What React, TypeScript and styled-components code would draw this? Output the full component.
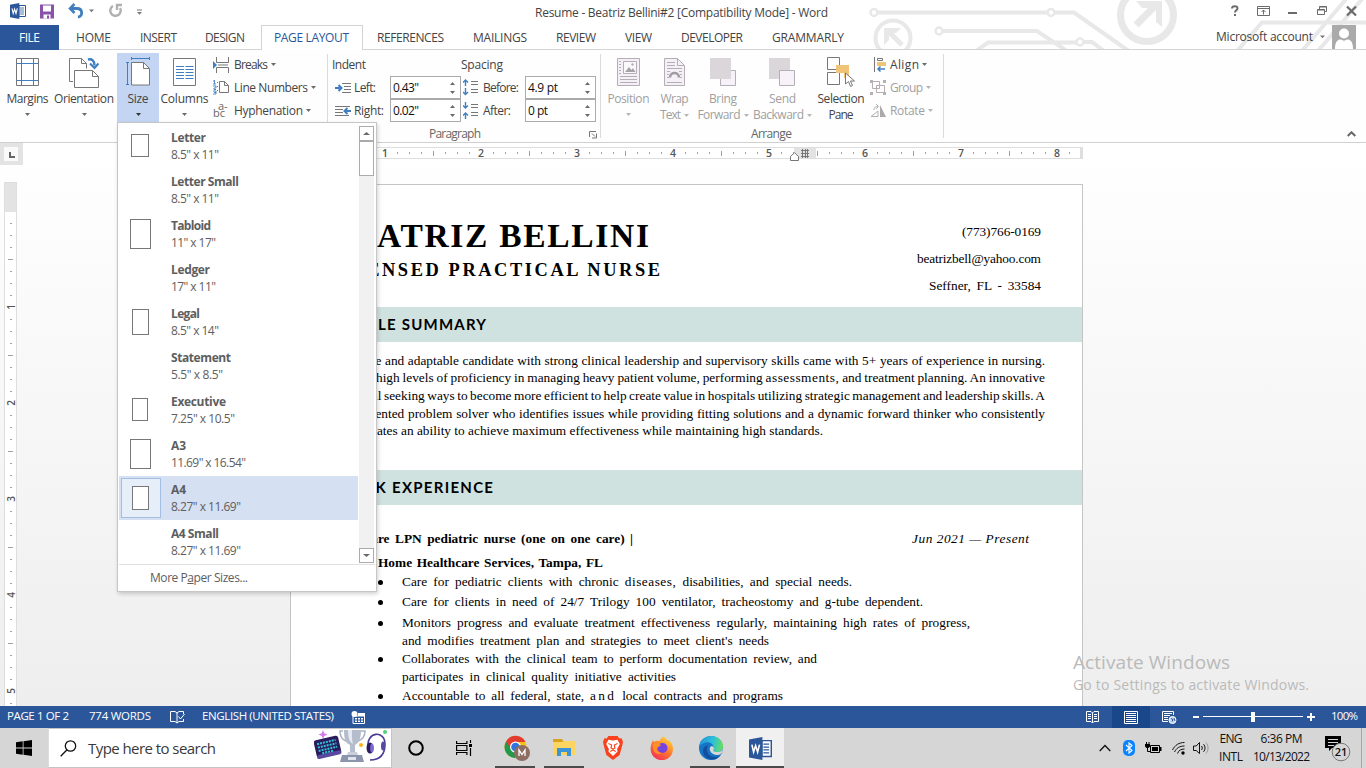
import React, { useLayoutEffect, useRef, useState } from "react";
import styled, { createGlobalStyle } from "styled-components";

const ui = `"Open Sans", "Noto Sans", "Liberation Sans", sans-serif`;
const serif = `"Liberation Serif", "Times New Roman", serif`;

const Global = createGlobalStyle`
  * { box-sizing: border-box; }
  html, body { margin: 0; padding: 0; overflow: hidden; }
  body { font-family: ${ui}; font-size: 12px; color: #444; background: #fff; }
  svg { display: block; flex: none; }
`;

/* ---------- text set to a measured width ---------- */
const FitBox = styled.span<{ $w: number }>`
  display: block;
  flex: none;
  width: ${(p) => p.$w}px;
  white-space: pre;
  text-align: left;
`;
const FitInner = styled.span`
  display: inline-block;
`;
const Lead = styled.span`
  white-space: pre;
  flex: none;
`;

function Fit({ w, words, lead, children }: { w: number; words?: boolean; lead?: string; children: React.ReactNode }) {
  const ref = useRef<HTMLSpanElement>(null);
  const [gap, setGap] = useState(0);
  useLayoutEffect(() => {
    const el = ref.current;
    if (!el) return;
    const text = el.textContent || "";
    const slots = words ? text.split(" ").length - 1 : text.length - 1;
    if (slots > 0) setGap((w - el.getBoundingClientRect().width) / slots);
  }, []);
  const style = words ? { wordSpacing: gap } : { letterSpacing: gap };
  return (
    <>
      {lead && <Lead style={style}>{lead}</Lead>}
      <FitBox $w={w}>
        <FitInner ref={ref} style={style}>{children}</FitInner>
      </FitBox>
    </>
  );
}

/* ---------- shell ---------- */
const Screen = styled.div`
  position: relative;
  width: 1366px;
  height: 768px;
  display: flex;
  flex-direction: column;
  overflow: hidden;
  background: #fff;
`;
const Header = styled.header`
  position: relative;
  height: 50px;
  flex: none;
`;
const Circuit = styled.svg`
  position: absolute;
  left: 860px;
  top: 0;
`;
const TitleBar = styled.div`
  position: relative;
  display: flex;
  height: 25px;
  line-height: 25px;
`;
const Quick = styled.div`
  display: flex;
  width: 535px;
  padding: 3px 0 0 10px;
`;
const Gap = styled.div<{ $w: number }>`
  width: ${(p) => p.$w}px;
  flex: none;
`;
const WinButtons = styled.div`
  display: flex;
  margin-left: auto;
  padding-top: 4px;
  padding-right: 9px;
`;
const Tabs = styled.nav`
  position: relative;
  display: flex;
  height: 25px;
  line-height: 25px;
  border-bottom: 1px solid #d4d4d4;
`;
const FileTab = styled.div`
  width: 59px;
  height: 25px;
  padding-left: 19px;
  background: #2b579a;
  color: #fff;
`;
const Tab = styled.div<{ $ml: number; $active?: boolean }>`
  margin-left: ${(p) => p.$ml}px;
  height: 25px;
  ${(p) => p.$active && `
    padding: 0 12px;
    width: 102px;
    line-height: 23px;
    border: 1px solid #d4d4d4;
    border-bottom: 0;
    background: #fff;
    color: #2b579a;`}
`;
const Account = styled.div`
  display: flex;
  margin-left: auto;
  padding-right: 10px;
  line-height: 24px;
`;

/* ---------- ribbon ---------- */
const Ribbon = styled.section`
  display: flex;
  height: 93px;
  flex: none;
  border-bottom: 1px solid #d0d0d0;
  background: #fefefe;
  position: relative;
`;
const Group = styled.div<{ $w: number; $pl?: number }>`
  display: flex;
  width: ${(p) => p.$w}px;
  height: 84px;
  margin-top: 4px;
  padding-left: ${(p) => p.$pl || 0}px;
  border-right: 1px solid #dcdcdc;
`;
const BigButton = styled.div<{ $w: number; $on?: boolean; $off?: boolean }>`
  display: flex;
  flex-direction: column;
  align-items: center;
  width: ${(p) => p.$w}px;
  height: 69px;
  margin-top: -1px;
  padding-top: 4px;
  line-height: 16px;
  background: ${(p) => (p.$on ? "#c3d5f2" : "transparent")};
  color: ${(p) => (p.$off ? "#a0a0a0" : "#444")};
`;
const IconSlot = styled.div`
  height: 34px;
  flex: none;
`;
const LabelRow = styled.div`
  display: flex;
  align-items: center;
  height: 16px;
  gap: 3px;
`;
const SmallCol = styled.div`
  display: flex;
  flex-direction: column;
  height: 69px;
  margin: -1px 0 0 3px;
`;
const SmallButton = styled.div<{ $off?: boolean }>`
  display: flex;
  align-items: center;
  height: 23px;
  color: ${(p) => (p.$off ? "#a0a0a0" : "#444")};
`;
const SmallIcon = styled.div<{ $w: number }>`
  width: ${(p) => p.$w}px;
  flex: none;
`;
const ArrowPad = styled.div`
  margin-left: 3px;
`;
const Fields = styled.div`
  display: flex;
  flex-direction: column;
  width: 100%;
`;
const FieldHeads = styled.div`
  display: flex;
  height: 22px;
  line-height: 22px;
`;
const FieldRow = styled.div`
  display: flex;
  align-items: center;
  height: 23px;
`;
const Spin = styled.div`
  display: flex;
  justify-content: space-between;
  align-items: center;
  width: 71px;
  height: 23px;
  padding: 0 5px 0 2px;
  border: 1px solid #ababab;
  background: #fff;
  color: #111;
`;
const SpinArrows = styled.div`
  display: flex;
  flex-direction: column;
  gap: 6px;
`;
const GroupTitle = styled.div<{ $pl: number }>`
  display: flex;
  height: 18px;
  margin-top: 3px;
  line-height: 18px;
  padding-left: ${(p) => p.$pl}px;
  color: #666;
`;
const Stack = styled.div`
  display: flex;
  flex-direction: column;
`;
const Row = styled.div`
  display: flex;
`;
const Collapse = styled.div`
  margin-left: auto;
  padding: 81px 10px 0 0;
`;

/* ---------- workspace ---------- */
const Work = styled.main`
  position: relative;
  display: flex;
  height: 563px;
  flex: none;
  background: linear-gradient(#fff, #eeeeee);
  overflow: hidden;
`;
const LeftRail = styled.div`
  width: 290px;
  flex: none;
`;
const TabStop = styled.div`
  width: 23px;
  height: 22px;
  padding: 4px;
  background: #e3e3e3;
`;
const VRuler = styled.div`
  width: 13px;
  height: 530px;
  margin: 17px 0 0 4px;
  border: 1px solid #dedede;
  background: #fff;
`;
const VMargin = styled.div`
  height: 29px;
  background: #e3e3e3;
`;
const VCells = styled.div`
  padding-top: 5px;
`;
const VCell = styled.div`
  display: flex;
  align-items: center;
  justify-content: center;
  height: 12px;
`;
const Tick = styled.i<{ $w: number; $h: number }>`
  width: ${(p) => p.$w}px;
  height: ${(p) => p.$h}px;
  background: #a2a2a2;
`;
const Num = styled.span<{ $v?: boolean }>`
  font-size: 10.5px;
  line-height: 10px;
  font-weight: 600;
  color: #555;
  ${(p) => p.$v && "transform: rotate(-90deg); font-size: 10px;"}
`;
const PageCol = styled.div`
  width: 793px;
  flex: none;
`;
const HRuler = styled.div`
  position: relative;
  z-index: 0;
  display: flex;
  height: 12px;
  margin-top: 4px;
  padding-left: 5px;
  border-top: 1px solid #dedede;
  border-bottom: 1px solid #dedede;
  border-right: 3px solid #dedede;
  background: #fff;
  overflow: hidden;
`;
const HCell = styled.div`
  display: flex;
  align-items: center;
  justify-content: center;
  width: 12px;
  flex: none;
  z-index: 1;
`;
const ColumnMark = styled.div`
  position: absolute;
  left: 504px;
  top: -1px;
  width: 22px;
  height: 12px;
  background: #e3e3e3;
`;
const Marker = styled.svg`
  position: absolute;
  left: 790px;
  top: 9px;
`;
const Paper = styled.article`
  height: 540px;
  margin-top: 25px;
  border: 1px solid #c4c4c4;
  background: #fff;
  color: #000;
  font-family: ${serif};
  font-size: 13.33px;
  overflow: hidden;
`;
const DocHead = styled.div`
  display: flex;
  height: 122px;
`;
const NameCol = styled.div`
  width: 369px;
  padding-top: 31px;
  font-weight: 700;
`;
const Name = styled.div`
  display: flex;
  justify-content: flex-end;
  width: 358px;
  height: 40px;
  line-height: 40px;
  font-size: 33.5px;
`;
const Role = styled.div`
  display: flex;
  justify-content: flex-end;
  height: 24px;
  margin-top: 2px;
  line-height: 24px;
  font-size: 18.4px;
`;
const Contact = styled.div`
  display: flex;
  flex-direction: column;
  align-items: flex-end;
  width: 381px;
  padding-top: 33px;
  line-height: 27px;
`;
const Bar = styled.div<{ $r: number }>`
  display: flex;
  justify-content: flex-end;
  height: 35px;
  padding-right: ${(p) => p.$r}px;
  background: #d0e2e0;
  line-height: 35px;
  font-family: Lato, "Open Sans", sans-serif;
  font-weight: 700;
  font-size: 15px;
`;
const Summary = styled.div`
  height: 128px;
  padding-top: 10px;
`;
const Line = styled.div<{ $r: number; $h: number; $b?: boolean }>`
  display: flex;
  justify-content: flex-end;
  width: ${(p) => p.$r}px;
  height: ${(p) => p.$h}px;
  line-height: 18px;
  font-weight: ${(p) => (p.$b ? 700 : 400)};
`;
const Spaced = styled.span`
  letter-spacing: 0.5px;
`;
const Wide = styled.span`
  letter-spacing: 2.4px;
`;
const Job = styled.div`
  padding-top: 25px;
`;
const JobRow = styled.div`
  display: flex;
`;
const JobDate = styled.div`
  margin-left: 279px;
  line-height: 17px;
  font-style: italic;
`;
const Bullet = styled.div<{ $h: number }>`
  display: flex;
  height: ${(p) => p.$h}px;
  padding-left: 87px;
  line-height: 18px;
`;
const Dot = styled.i<{ $on: boolean }>`
  width: 5px;
  height: 5px;
  margin: 7px 19px 0 0;
  border-radius: 50%;
  background: ${(p) => (p.$on ? "#000" : "transparent")};
`;
const Watermark = styled.div`
  position: absolute;
  left: 1073px;
  top: 506px;
  color: #bababa;
  font-size: 19px;
  line-height: 27px;
`;
const WatermarkSub = styled.div`
  font-size: 14px;
  line-height: 17px;
`;

/* ---------- dropdown ---------- */
const Menu = styled.div`
  position: absolute;
  left: 117px;
  top: 122px;
  width: 260px;
  height: 470px;
  padding: 1px;
  border: 1px solid #c6c6c6;
  background: #fff;
  box-shadow: 1px 2px 4px rgba(0, 0, 0, 0.18);
  color: #5e5e5e;
`;
const MenuBody = styled.div`
  display: flex;
  height: 440px;
`;
const Items = styled.div`
  width: 239px;
`;
const Item = styled.div<{ $on?: boolean }>`
  display: flex;
  height: 44px;
  background: ${(p) => (p.$on ? "#d5e0f2" : "transparent")};
`;
const Thumb = styled.div<{ $on?: boolean }>`
  display: flex;
  align-items: center;
  justify-content: center;
  width: 40px;
  height: 40px;
  margin: 2px 10px 2px 2px;
  padding: 0 2px 1px 0;
  border: 1px solid ${(p) => (p.$on ? "#a3bde3" : "transparent")};
  background: ${(p) => (p.$on ? "#e6eefa" : "transparent")};
`;
const Sheet = styled.i<{ $w: number; $h: number }>`
  width: ${(p) => p.$w}px;
  height: ${(p) => p.$h}px;
  border: 1px solid #777;
  background: #fff;
`;
const ItemText = styled.div`
  padding-top: 5px;
  line-height: 17px;
`;
const ItemName = styled.div`
  font-weight: 700;
`;
const Scroll = styled.div`
  display: flex;
  flex-direction: column;
  width: 15px;
  height: 437px;
  margin: 2px 0 0 1px;
  background: #f1f1f1;
`;
const ScrollButton = styled.div`
  display: flex;
  align-items: center;
  justify-content: center;
  height: 15px;
  border: 1px solid #ababab;
  background: #fff;
`;
const ScrollThumb = styled.div`
  height: 35px;
  margin-bottom: auto;
  border: 1px solid #ababab;
  background: #fff;
`;
const MoreSizes = styled.div`
  height: 27px;
  padding-left: 31px;
  border-top: 1px solid #e1e1e1;
  line-height: 26px;
`;

/* ---------- status bar ---------- */
const Status = styled.footer`
  display: flex;
  align-items: center;
  height: 22px;
  flex: none;
  background: #2b579a;
  color: #fff;
  font-size: 11.5px;
  line-height: 20px;
  position: relative;
`;
const StatusText = styled.div`
  height: 22px;
`;
const ViewOn = styled.div`
  display: flex;
  align-items: center;
  width: 38px;
  height: 22px;
  padding-left: 12px;
  background: #19478a;
`;
const Push = styled.div`
  margin-left: auto;
`;

/* ---------- taskbar ---------- */
const Taskbar = styled.footer`
  display: flex;
  height: 40px;
  flex: none;
  background: #d6d6d6;
  color: #111;
`;
const Start = styled.div`
  width: 48px;
  padding: 12px 0 0 16px;
`;
const Search = styled.div`
  display: flex;
  align-items: center;
  width: 344px;
  height: 40px;
  padding-left: 11px;
  border: 1px solid #c4c4c4;
  border-left-color: #ddd;
  background: #fff;
  color: #3a3a3a;
  font-size: 15px;
`;
const TaskButton = styled.div<{ $w: number; $line?: number; $on?: boolean }>`
  display: flex;
  flex-direction: column;
  align-items: center;
  justify-content: space-between;
  width: ${(p) => p.$w}px;
  height: 40px;
  background: ${(p) => (p.$on ? "#f0f0f0" : "transparent")};
  &::after {
    content: "";
    width: ${(p) => p.$line || 0}px;
    height: 2px;
    background: #4b4b4b;
  }
`;
const AppIcon = styled.div<{ $pl?: number }>`
  display: flex;
  align-items: center;
  height: 38px;
  padding-top: 2px;
  padding-left: ${(p) => p.$pl || 0}px;
`;
const Tray = styled.div`
  display: flex;
  align-items: center;
  margin-left: auto;
`;
const TrayText = styled.div`
  display: flex;
  flex-direction: column;
  align-items: center;
  line-height: 18px;
  padding-bottom: 1px;
`;
const Desk = styled.div`
  width: 5px;
  height: 40px;
  border-left: 1px solid #a5a5a5;
`;

/* ---------- icons ---------- */
const Arrow = ({ c = "#6a6a6a", up, w = 5 }: { c?: string; up?: boolean; w?: number }) => (
  <svg width={w} height={3} viewBox="0 0 6 3" preserveAspectRatio="none"><path d={up ? "M3 0L6 3H0z" : "M0 0H6L3 3z"} fill={c} /></svg>
);
const WordLogo = ({ s }: { s: number }) => (
  <svg width={s} height={s} viewBox="0 0 16 16">
    <path d="M9 2.500h6.500v11H9z" fill="#fff" stroke="#2b579a" />
    <path d="M10 5h4M10 7h4M10 9h4M10 11h4" stroke="#2b579a" strokeWidth=".8" />
    <path d="M0 1.800L9.300 0v16L0 14.200z" fill="#2b579a" />
    <path d="M2 5.300l1.200 5.200L4.600 6l1.400 4.500L7.300 5.300" fill="none" stroke="#fff" strokeWidth="1.100" />
  </svg>
);
const g = "#777";
const b = "#3f7fbf";
const Margins = () => (
  <svg width="23" height="28" fill="none"><path d="M.5.5h22v27H.5z" stroke={g} fill="#fff" /><path d="M5.500 1v26M17.500 1v26M1 5.500h21M1 22.500h21" stroke={b} /></svg>
);
const Orientation = () => (
  <svg width="30" height="31" fill="none" stroke={g}>
    <path d="M4 24.500H.5V1.500h12l5 5v5" fill="#fff" /><path d="M12.500 1.500v5h5" />
    <path d="M5.500 13.500h18l6 6v11h-24z" fill="#fff" /><path d="M23.500 13.500v6h6" />
    <path d="M19 2.500c4-1 6.500 1.500 6.500 6" stroke={b} strokeWidth="2.400" /><path d="M21 6.500l4.500 4.500 4-4.500" stroke={b} strokeWidth="2.200" />
  </svg>
);
const Size = () => (
  <svg width="25" height="30" fill="none">
    <path d="M5.500 5.500h12l6 6v16.500h-18z" fill="#fff" stroke={g} /><path d="M17.500 5.500v6h6" stroke={g} />
    <path d="M5.500 1.500h18M5.500 0v3M23.500 0v3M1.500 5.500v22M0 5.500h3M0 27.500h3" stroke={b} />
  </svg>
);
const Columns = () => (
  <svg width="23" height="28" fill="none"><path d="M.5.5h22v27H.5z" stroke={g} fill="#fff" />
    <path d="M3 8.500h8M3 11.500h8M3 14.500h8M3 17.500h8M3 20.500h8M12.500 8.500h8M12.500 11.500h8M12.500 14.500h8M12.500 17.500h8M12.500 20.500h8" stroke={b} /></svg>
);
const Breaks = () => (
  <svg width="17" height="16" fill="none"><path d="M3.500 0v5.500h12V0M3.500 16v-5.500h12V16M5 8h10" stroke={g} /><path d="M0 4l4 4-4 4z" fill={b} /></svg>
);
const LineNumbers = () => (
  <svg width="17" height="15" fill="none">
    <path d="M1.500 0v4M0 4h3M0 1h1M0 6h3v2H1v1.500h2M0 11h3v3H0M1 12.500h2" stroke={b} strokeWidth=".9" />
    <path d="M6.500 1.500h5l4 4v7h-9z" fill="#fff" stroke={g} /><path d="M11.500 1.500v4h4M4.500 2v1M4.500 6v1M4.500 10v1" stroke={g} />
  </svg>
);
const HyphenBox = styled.div`
  display: flex;
  align-items: flex-start;
  height: 17px;
  color: #666;
  font-size: 11px;
  line-height: 22px;
`;
const HyphenTop = styled.span`
  margin-left: -7px;
  line-height: 8px;
`;
const IndentIcon = ({ right }: { right?: boolean }) => (
  <svg width="17" height="12" fill="none">
    {right ? (
      <><path d="M0 1.500h15M0 4.500h8M0 7.500h8M0 10.500h14" stroke={g} /><path d="M16 6h-6M12.500 3l-3 3 3 3" stroke={b} strokeWidth="2" /></>
    ) : (
      <><path d="M7 1.500h9M9 4.500h7M9 7.500h7M7 10.500h9" stroke={g} /><path d="M0 6h6M3.500 3l3 3-3 3" stroke={b} strokeWidth="2" /></>
    )}
  </svg>
);
const SpacingIcon = ({ after }: { after?: boolean }) => (
  <svg width="16" height="17" fill="none">
    <path d="M8 2.500h7M8 5.500h7M8 10.500h7M8 13.500h7" stroke={g} />
    {after ? (
      <path d="M2.500 0v6M0 3.500l2.500 2.500 2.500-2.500M2.500 17v-6M0 13.500l2.500-2.500 2.500 2.500" stroke={b} strokeWidth="1.400" />
    ) : (
      <path d="M2.500 7V1M0 3.500l2.500-2.500 2.500 2.500M2.500 9v6.500M0 13l2.500 2.500 2.500-2.500" stroke={b} strokeWidth="1.400" />
    )}
  </svg>
);
const pg = "#b5afb5";
const PositionIcon = () => (
  <svg width="23" height="28" fill="none" stroke={pg}>
    <path d="M.5.5h22v27H.5z" fill="#f5f0f7" /><path d="M6.500 3.500h13v12h-13z" fill="#fbf8fc" />
    <path d="M8 14l4-5 2.500 3 1.500-2 2.500 4z" fill="#a7a2a7" stroke="none" /><circle cx="15.500" cy="6.500" r="1.200" fill={pg} stroke="none" />
    <path d="M2 3.500h2M2 6.500h2M2 9.500h2M2 12.500h2M2 15.500h2M3 18.500h17M3 21.500h17M3 24.500h17" />
  </svg>
);
const WrapIcon = () => (
  <svg width="21" height="28" fill="none" stroke={pg}>
    <path d="M.5.5h13l7 7v20H.5z" fill="#f5f0f7" /><path d="M13.500.5v7h7M3 4.500h8M3 7.500h8M3 10.500h15M3 13.500h3M15 13.500h3M3 16.500h2M16 16.500h2M3 19.500h2M16 19.500h2M3 24.500h15" />
    <path d="M6 19.500c0-6 9-6 9 0" stroke="#a09ba0" strokeWidth="2.500" />
  </svg>
);
const BringIcon = () => (
  <svg width="27" height="28"><path d="M10.500 12.500h15v15h-15z" fill="#f7f2fa" stroke={pg} /><path d="M0 0h21v21H0z" fill="#dbd6da" /></svg>
);
const SendIcon = () => (
  <svg width="27" height="28"><path d="M0 0h21v21H0z" fill="#dbd6da" /><path d="M10.500 12.500h15v15h-15z" fill="#f7f2fa" stroke={pg} /></svg>
);
const SelectionIcon = () => (
  <svg width="28" height="30" fill="none">
    <path d="M.5.5h12v12H.5zM.5 15.500h12v12H.5z" fill="#fff" stroke={g} /><path d="M9 8h13v13h-5v-5H9z" fill="#efc477" />
    <path d="M18.500 16v11l3-2.500 2 5 2-1-2-4.500h4z" fill="#fff" stroke={g} />
  </svg>
);
const AlignIcon = () => (
  <svg width="13" height="15" fill="none"><path d="M.5 0v15M3.500 1.500h5v2h-5z" stroke={g} /><path d="M3 5h9v4H3z" fill="#efc477" /><path d="M11 12H4M6.500 9.500L4 12l2.500 2.500" stroke={b} strokeWidth="1.500" /></svg>
);
const GroupIcon = () => (
  <svg width="17" height="15" fill="none"><path d="M2.500 1.500h7v7h-7zM6.500 5.500h8v7h-8z" stroke={pg} /><path d="M0 0h3v3H0zM13 0h3v3h-3zM0 12h3v3H0zM13 12h3v3h-3z" fill="#b2b2b2" /></svg>
);
const RotateIcon = () => (
  <svg width="17" height="14" fill="none"><path d="M1 12.500h7V7z" stroke={pg} /><path d="M10 1l6 12h-6z" fill="#aaa" /><path d="M4 6c0-3 1.500-3.500 4-3.500M6 0l2.500 2.500L6 5" stroke="#b2b2b2" /></svg>
);

const sizes: [string, number, string, number, number?, number?][] = [
  ["Letter", 35, `8.5" x 11"`, 48, 18, 23],
  ["Letter Small", 68, `8.5" x 11"`, 48],
  ["Tabloid", 40, `11" x 17"`, 45, 21, 30],
  ["Ledger", 39, `17" x 11"`, 45],
  ["Legal", 29, `8.5" x 14"`, 48, 17, 26],
  ["Statement", 60, `5.5" x 8.5"`, 52],
  ["Executive", 55, `7.25" x 10.5"`, 64, 16, 23],
  ["A3", 15, `11.69" x 16.54"`, 75, 21, 30],
  ["A4", 15, `8.27" x 11.69"`, 70, 17, 24],
  ["A4 Small", 48, `8.27" x 11.69"`, 70],
];
const tabs: [string, number, number][] = [
  ["REFERENCES", 67, 14], ["MAILINGS", 54, 29], ["REVIEW", 40, 29], ["VIEW", 27, 29], ["DEVELOPER", 62, 29], ["GRAMMARLY", 72, 29],
];

const Big = ({ w, icon, label, lw, on, off, second, sw, arrow = true }: any) => (
  <BigButton $w={w} $on={on} $off={off}>
    <IconSlot>{icon}</IconSlot>
    <LabelRow><Fit w={lw}>{label}</Fit></LabelRow>
    <LabelRow>
      {second && <Fit w={sw}>{second}</Fit>}
      {arrow && <Arrow c={off ? "#b5b5b5" : on ? "#333" : undefined} />}
    </LabelRow>
  </BigButton>
);
const Small = ({ icon, iw, label, w, off }: any) => (
  <SmallButton $off={off}>
    <SmallIcon $w={iw}>{icon}</SmallIcon>
    <Fit w={w}>{label}</Fit>
    <ArrowPad><Arrow c={off ? "#b5b5b5" : undefined} /></ArrowPad>
  </SmallButton>
);
const Spinner = ({ value, w }: { value: string; w: number }) => (
  <Spin><Fit w={w}>{value}</Fit><SpinArrows><Arrow up /><Arrow /></SpinArrows></Spin>
);

function TopBar() {
  return (
    <Header>
      <Circuit width="506" height="49" fill="none" stroke="#e8e8e8" strokeWidth="4">
        <circle cx="14" cy="12.500" r="3.500" strokeWidth="2.500" /><path d="M18 12.500h169" />
        <circle cx="191" cy="12.500" r="3.500" strokeWidth="2.500" /><path d="M195 12.500h19l54 38" />
        <circle cx="33" cy="38" r="17.500" /><path d="M42 45L28 31" strokeWidth="5" /><path d="M24 28h17l-5 5h-7v7l-5 5z" fill="#e8e8e8" stroke="none" />
        <circle cx="79" cy="31" r="3.500" strokeWidth="2.500" /><path d="M83 31h94l30 20M116 51l12-8.500h88" />
        <circle cx="220" cy="42" r="3.500" strokeWidth="2.500" /><path d="M224 42h8l12 9" />
        <circle cx="287" cy="15" r="26.500" strokeWidth="7" /><path d="M276 25l20-20" strokeWidth="7" /><path d="M276 1h26v26l-6-5V8h-14z" fill="#e8e8e8" stroke="none" />
        <path d="M377 51l25-28.500h104M442 51l45-53M458 51l45-53" />
      </Circuit>
      <TitleBar>
        <Quick>
          <WordLogo s={16} />
          <Gap $w={14} />
          <svg width="14" height="16" viewBox="0 -1 14 15"><path d="M0 0h14v14H0z" fill="#8a53aa" /><path d="M3 1h8v6H3zM3.500 10h7v4h-7z" fill="#fff" /><path d="M7 11h2v3H7z" fill="#8a53aa" /></svg>
          <Gap $w={14} />
          <svg width="16" height="16" fill="none" stroke="#3f7fbf"><path d="M2 5.500h7c6 0 6 8 1 8.500" strokeWidth="2.800" /><path d="M6.500 1L2 5.500 6.500 10" strokeWidth="2.500" /></svg>
          <Gap $w={5} />
          <svg width="6" height="16"><path d="M0 6.500h5L2.500 9.200z" fill="#777" /></svg>
          <Gap $w={14} />
          <svg width="14" height="16" fill="none" stroke="#b0b0b0" strokeWidth="2.400"><path d="M4 3A5.200 5.200 0 1 0 11 5" /><path d="M8 7V2h5" /></svg>
          <Gap $w={14} />
          <svg width="6" height="16"><path d="M0 7h5" stroke="#777" /><path d="M0 9h5L2.500 11.700z" fill="#777" /></svg>
        </Quick>
        <Fit w={293}>Resume - Beatriz Bellini#2 [Compatibility Mode] - Word</Fit>
        <WinButtons>
          <svg width="8" height="14" fill="none" stroke="#6b6b6b" strokeWidth="2"><path d="M1 4.500C1 1.500 6.500 1.500 6.500 4.200c0 2-2.500 2-2.500 4.300M4 10v2" /></svg>
          <Gap $w={18} />
          <svg width="14" height="14" fill="none" stroke="#6b6b6b"><path d="M.5 2.500h12v9H.5zM.5 4.500h12M6.500 10.500V6M4.500 8l2-2 2 2" /></svg>
          <Gap $w={17} />
          <svg width="9" height="14"><path d="M0 8h9v2H0z" fill="#6b6b6b" /></svg>
          <Gap $w={20} />
          <svg width="10" height="14" fill="none" stroke="#6b6b6b"><path d="M.5 5.500h7v5h-7zM2.500 5V2.500h7v5H8M2.500 3h7M.5 6h7" /></svg>
          <Gap $w={19} />
          <svg width="11" height="14" stroke="#6b6b6b" strokeWidth="2.200"><path d="M1 2.500l9 9M10 2.500l-9 9" /></svg>
        </WinButtons>
      </TitleBar>
      <Tabs>
        <FileTab><Fit w={21}>FILE</Fit></FileTab>
        <Tab $ml={17}><Fit w={35}>HOME</Fit></Tab>
        <Tab $ml={29}><Fit w={37}>INSERT</Fit></Tab>
        <Tab $ml={28}><Fit w={40}>DESIGN</Fit></Tab>
        <Tab $ml={16} $active><Fit w={75}>PAGE LAYOUT</Fit></Tab>
        {tabs.map(([t, w, ml]) => <Tab key={t} $ml={ml}><Fit w={w}>{t}</Fit></Tab>)}
        <Account>
          <Fit w={97}>Microsoft account</Fit>
          <Gap $w={7} />
          <svg width="12" height="24"><path d="M0 10.500h5L2.500 13.200z" fill="#777" /></svg>
          <svg width="24" height="24"><path d="M0 0h24v24H0z" fill="#aaa" /><circle cx="12" cy="8.500" r="5" fill="#fff" /><path d="M3 24c0-8 3-9.500 6-9.500 2 1.500 4 1.500 6 0 3 0 6 1.500 6 9.500z" fill="#fff" /></svg>
        </Account>
      </Tabs>
    </Header>
  );
}

function RibbonBar() {
  return (
    <Ribbon>
      <Group $w={328} $pl={4}>
        <Big w={47} lw={42} label="Margins" icon={<svg width="23" height="29" viewBox="0 -1 23 29"><Margins /></svg>} />
        <Big w={66} lw={60} label="Orientation" icon={<Orientation />} />
        <Big w={42} lw={21} label="Size" on icon={<Size />} />
        <Big w={51} lw={48} label="Columns" icon={<svg width="23" height="29" viewBox="0 -1 23 29"><Columns /></svg>} />
        <SmallCol>
          <Small icon={<Breaks />} iw={21} label="Breaks" w={34} />
          <Small icon={<LineNumbers />} iw={21} label="Line Numbers" w={74} />
          <Small icon={<HyphenBox>bc<HyphenTop>a-</HyphenTop></HyphenBox>} iw={21} label="Hyphenation" w={69} />
        </SmallCol>
      </Group>
      <Group $w={273} $pl={4}>
        <Fields>
          <FieldHeads><Fit w={34}>Indent</Fit><Gap $w={95} /><Fit w={42}>Spacing</Fit></FieldHeads>
          <FieldRow>
            <Gap $w={3} /><IndentIcon /><Gap $w={2} /><Fit w={22}>Left:</Fit><Gap $w={14} />
            <Spinner value={`0.43"`} w={26} />
            <Gap $w={2} /><SpacingIcon /><Gap $w={4} /><Fit w={36}>Before:</Fit><Gap $w={6} />
            <Spinner value="4.9 pt" w={30} />
          </FieldRow>
          <FieldRow>
            <Gap $w={3} /><IndentIcon right /><Gap $w={2} /><Fit w={30}>Right:</Fit><Gap $w={6} />
            <Spinner value={`0.02"`} w={26} />
            <Gap $w={2} /><SpacingIcon after /><Gap $w={4} /><Fit w={28}>After:</Fit><Gap $w={14} />
            <Spinner value="0 pt" w={20} />
          </FieldRow>
          <GroupTitle $pl={97}>
            <Fit w={52}>Paragraph</Fit><Gap $w={108} />
            <svg width="8" height="18" fill="none" stroke="#777"><path d="M.5 12V6.500H7M3 8.500l3 3M7.500 8.500V13H3" /></svg>
          </GroupTitle>
        </Fields>
      </Group>
      <Group $w={343}>
        <Stack>
          <Row>
            <Gap $w={3} />
            <Big w={49} lw={42} off label="Position" icon={<svg width="23" height="29" viewBox="0 -1 23 29"><PositionIcon /></svg>} />
            <Big w={43} lw={28} off label="Wrap" second="Text" sw={21} icon={<svg width="21" height="29" viewBox="0 -1 21 29"><WrapIcon /></svg>} />
            <Big w={54} lw={28} off label="Bring" second="Forward" sw={43} icon={<svg width="27" height="29" viewBox="0 -1 27 29"><BringIcon /></svg>} />
            <Big w={65} lw={27} off label="Send" second="Backward" sw={51} icon={<svg width="27" height="29" viewBox="0 -1 27 29"><SendIcon /></svg>} />
            <Big w={52} lw={47} label="Selection" second="Pane" sw={25} arrow={false} icon={<SelectionIcon />} />
            <SmallCol>
              <Small icon={<svg width="16" height="15" viewBox="-4 0 16 15"><AlignIcon /></svg>} iw={20} label="Align" w={29} />
              <Small icon={<GroupIcon />} iw={20} label="Group" w={33} off />
              <Small icon={<RotateIcon />} iw={20} label="Rotate" w={35} off />
            </SmallCol>
          </Row>
          <GroupTitle $pl={150}><Fit w={41}>Arrange</Fit></GroupTitle>
        </Stack>
      </Group>
      <Collapse><svg width="9" height="6" fill="none" stroke="#666" strokeWidth="2"><path d="M.7 5L4.500 1.300 8.300 5" /></svg></Collapse>
    </Ribbon>
  );
}

const bullets: [string | React.ReactNode, number, number, boolean][] = [
  [<>Care for pediatric clients with chronic <Spaced>diseases,</Spaced> disabilities, and special needs.</>, 450, 20, true],
  ["Care for clients in need of 24/7 Trilogy 100 ventilator, tracheostomy and g-tube dependent.", 521, 21, true],
  ["Monitors progress and evaluate treatment effectiveness regularly, maintaining high rates of progress,", 568, 18, true],
  ["and modifies treatment plan and strategies to meet client's needs", 367, 18, false],
  ["Collaborates with the clinical team to perform documentation review, and", 415, 18, true],
  ["participates in clinical quality initiative activities", 274, 19, false],
  [<>Accountable to all federal, state, <Wide>and</Wide> local contracts and programs</>, 381, 19, true],
];

function Document() {
  return (
    <Paper>
      <DocHead>
        <NameCol>
          <Name><Fit w={272} lead="BE">ATRIZ BELLINI</Fit></Name>
          <Role><Fit w={278} lead="LICE">NSED PRACTICAL NURSE</Fit></Role>
        </NameCol>
        <Contact>
          <Fit w={79}>(773)766-0169</Fit>
          <Fit w={124}>beatrizbell@yahoo.com</Fit>
          <Fit w={112} words>Seffner, FL - 33584</Fit>
        </Contact>
      </DocHead>
      <Bar $r={596}><Fit w={108} lead="PROFI">LE SUMMARY</Fit></Bar>
      <Summary>
        <Line $r={754} $h={17}><Fit words w={660} lead="Versatile ">and adaptable candidate with strong clinical leadership and supervisory skills came with 5+ years of experience in nursing.</Fit></Line>
        <Line $r={754} $h={18}><Fit words w={669} lead="with ">high levels of proficiency in managing heavy patient volume, performing <Spaced>assessments,</Spaced> and treatment planning. An innovative</Fit></Line>
        <Line $r={754} $h={18}><Fit words w={661} lead="professional ">seeking ways to become more efficient to help create value in hospitals utilizing strategic management and leadership skills. A</Fit></Line>
        <Line $r={754} $h={17}><Fit words w={637} lead="detail-oriented ">problem solver who identifies issues while providing fitting solutions and a dynamic forward thinker who consistently</Fit></Line>
        <Line $r={532} $h={18}><Fit words w={422} lead="demonstrates ">an ability to achieve maximum effectiveness while maintaining high standards.</Fit></Line>
      </Summary>
      <Bar $r={589}><Fit w={101} lead="WORK ">EXPERIENCE</Fit></Bar>
      <Job>
        <JobRow>
          <Line $r={342} $h={24} $b><Fit words w={238} lead="Home care ">LPN pediatric nurse (one on one care) |</Fit></Line>
          <JobDate><Fit w={117}>Jun 2021 — Present</Fit></JobDate>
        </JobRow>
        <Line $r={312} $h={19} $b><Fit words w={225}>Home Healthcare Services, Tampa, FL</Fit></Line>
        {bullets.map(([t, w, h, on], i) => (
          <Bullet key={i} $h={h}><Dot $on={on} /><Fit words w={w}>{t}</Fit></Bullet>
        ))}
      </Job>
    </Paper>
  );
}

function Workspace() {
  return (
    <Work>
      <LeftRail>
        <TabStop>
          <svg width="14" height="14"><path d="M0 0h14v14H0z" fill="#fafafa" /><path d="M6 5v5h5" fill="none" stroke="#666" strokeWidth="2" /></svg>
        </TabStop>
        <VRuler>
          <VMargin />
          <VCells>
            {Array.from({ length: 41 }, (_, i) => i + 1).map((k) => (
              <VCell key={k}>{k % 8 === 0 ? <Num $v>{k / 8}</Num> : <Tick $w={k % 4 === 0 ? 5 : 2} $h={1} />}</VCell>
            ))}
          </VCells>
        </VRuler>
      </LeftRail>
      <PageCol>
        <HRuler>
          <ColumnMark />
          {Array.from({ length: 65 }, (_, i) => i + 1).map((k) => (
            <HCell key={k}>
              {k === 43 ? <svg width="8" height="9" stroke="#777"><path d="M0 1.500h8M0 4.500h8M0 7.500h8M1.500 0v9M4.500 0v9M6.500 0v9" /></svg>
                : k % 8 === 0 ? <Num>{k / 8}</Num> : <Tick $w={1} $h={k % 4 === 0 ? 5 : 2} />}
            </HCell>
          ))}
        </HRuler>
        <Document />
      </PageCol>
      <Marker width="9" height="9" fill="#fff" stroke="#777"><path d="M.5 8.500v-4L4.500.7l4 3.800v4z" /></Marker>
      <Watermark>
        <Fit w={157}>Activate Windows</Fit>
        <WatermarkSub><Fit w={236}>Go to Settings to activate Windows.</Fit></WatermarkSub>
      </Watermark>
    </Work>
  );
}

function SizeMenu() {
  return (
    <Menu>
      <MenuBody>
        <Items>
          {sizes.map(([n, nw, d, dw, w, h]) => (
            <Item key={n} $on={n === "A4"}>
              <Thumb $on={n === "A4"}>{w && h && <Sheet $w={w} $h={h} />}</Thumb>
              <ItemText>
                <ItemName><Fit w={nw}>{n}</Fit></ItemName>
                <Fit w={dw}>{d}</Fit>
              </ItemText>
            </Item>
          ))}
        </Items>
        <Scroll>
          <ScrollButton><Arrow up w={7} /></ScrollButton>
          <ScrollThumb />
          <ScrollButton><Arrow w={7} /></ScrollButton>
        </Scroll>
      </MenuBody>
      <MoreSizes><Fit w={98}>More P<u>a</u>per Sizes...</Fit></MoreSizes>
    </Menu>
  );
}

function StatusBar() {
  return (
    <Status>
      <Gap $w={7} /><StatusText><Fit w={62}>PAGE 1 OF 2</Fit></StatusText>
      <Gap $w={20} /><StatusText><Fit w={62}>774 WORDS</Fit></StatusText>
      <Gap $w={19} />
      <svg width="15" height="13" fill="none" stroke="#fff"><path d="M7 2L5 .5H.5v10H5L7 12zM7 2L9 .5h4.500V3M7 12l2-1.500h4.500V8M8.500 5.500l2 2.500L14.500 3" /></svg>
      <Gap $w={17} /><StatusText><Fit w={132}>ENGLISH (UNITED STATES)</Fit></StatusText>
      <Gap $w={17} />
      <svg width="14" height="13"><path d="M2 5h11.500v7.500H2z" fill="none" stroke="#fff" /><circle cx="3.500" cy="3" r="3" fill="#fff" /><path d="M7 2h7v3H7zM4 7h2v1.500H4zM7 7h2v1.500H7zM10 7h2v1.500h-2zM4 9.500h2V11H4zM7 9.500h2V11H7zM10 9.500h2V11h-2z" fill="#fff" /></svg>
      <Push />
      <svg width="14" height="13" fill="none" stroke="#fff"><path d="M6.500 2L5 .5H.5v10H5l1.500 1.500L8 10.500h4.500V.5H8zM6.500 2v10M2 3.500h3M2 5.500h3M2 7.500h3M8 3.500h3M8 5.500h3M8 7.500h3" /></svg>
      <Gap $w={12} />
      <ViewOn><svg width="14" height="13" fill="none" stroke="#fff"><path d="M.5.5h13v12H.5zM2 2.500h10M2 4.500h10M2 6.500h10M2 8.500h10M2 10.500h10" /></svg></ViewOn>
      <Gap $w={12} />
      <svg width="15" height="13" fill="none" stroke="#fff"><path d="M6 10.500H.5V.5h11V4M2 2.500h8M2 4.500h6M2 6.500h4M2 8.500h4" /><circle cx="10.500" cy="9" r="3.500" fill="#c8d5ea" /><path d="M9 7.500l2 1-1 2M12 7l1 3" stroke="#2b579a" /></svg>
      <Gap $w={16} />
      <svg width="123" height="12"><path d="M0 5h6v2H0zM114 5h8v2h-8zM117 2h2v8h-2zM58 1h4v10h-4z" fill="#fff" /><path d="M10 5.500h100" stroke="#fff" /></svg>
      <Gap $w={15} />
      <StatusText><Fit w={27}>100%</Fit></StatusText>
      <Gap $w={8} />
    </Status>
  );
}

const SearchArt = () => (
  <svg width="74" height="36" viewBox="0 0 74 36">
    <path d="M9 0l1.300 3.200L13.500 4.500 10.300 6 9 9 7.700 6 4.500 4.500 7.700 3.200z" fill="#d77cf0" />
    <g transform="rotate(-13 13 17)"><rect x="1" y="8" width="25" height="18" rx="2.500" fill="#2a1a5e" /><rect x="1" y="23" width="25" height="4" rx="2" fill="#5a48a0" />
      <path d="M4 12h19M4 15.500h19M4 19h19M7 22h12" stroke="#2fc4cf" strokeWidth="2" strokeDasharray="2 1" /></g>
    <path d="M30 0h17c0 8-2 13-6 15v8h-5v-8c-5-2-6-7-6-15z" fill="#b5bccb" /><path d="M34 0h4c0 7 0 11 1 14-4-2-5-8-5-14z" fill="#e6eaf2" />
    <path d="M29 1h-3c0 6 3 9 6 10M47 1h4c0 6-4 9-7 10" fill="none" stroke="#aab2c4" strokeWidth="1.500" />
    <path d="M34 22h9l1 3H33z" fill="#c9cfdb" /><path d="M28 25h20l2 7H26z" fill="#8b95ac" /><path d="M34 27h8v3h-8z" fill="#dfe4ee" />
    <circle cx="47" cy="15" r="2" fill="#fdb515" /><circle cx="71" cy="2" r="2" fill="#4ed07e" />
    <path d="M54 18C52 1 71 0 71 14c0 9-4 16-15 16" fill="none" stroke="#4b3b99" strokeWidth="1.600" />
    <ellipse cx="56" cy="18" rx="3.500" ry="5.500" fill="#2a1a5e" /><ellipse cx="58" cy="18" rx="1.800" ry="4.500" fill="#7c6ad2" /><ellipse cx="69" cy="16" rx="2" ry="4.500" fill="#5a48a0" />
  </svg>
);
const Chrome = () => (
  <svg width="26" height="26" viewBox="0 0 26 26">
    <circle cx="11.500" cy="12" r="11" fill="#fbc116" /><path d="M2 6.500A11 11 0 0 0 11 23l4.500-8z" fill="#219b4b" /><path d="M2 6.500L7 14l5-7h9.500A11 11 0 0 0 2 6.500z" fill="#e33b2e" />
    <circle cx="11.500" cy="12" r="5.500" fill="#fff" /><circle cx="11.500" cy="12" r="4.300" fill="#2f73dd" />
    <circle cx="18" cy="18" r="8" fill="#8d6e63" /><path d="M15 21v-6l3 4.500 3-4.500v6" fill="none" stroke="#fff" strokeWidth="1.300" />
  </svg>
);
const Explorer = () => (
  <svg width="22" height="20"><path d="M0 1h9l2 3v4H0z" fill="#d9a21b" /><path d="M0 4h9l2-1h11v14H0z" fill="#fcd462" /><path d="M4 18v-8h14v8h-4v-4H8v4z" fill="#3c94d8" /></svg>
);
const Brave = () => (
  <svg width="20" height="24" viewBox="0 0 22 24" preserveAspectRatio="none"><path d="M6 0h10l2 2.500 2.500-.3L22 6l-.7 3-3 10L11 24l-7.300-5L.7 9 0 6l1.500-3.800 2.500.3z" fill="#f8421e" />
    <path d="M11 4.500l5-.8L18.500 8l-3 5 .5 2.500L11 20l-5-4.500.5-2.500-3-5L6 3.700z" fill="#fff" /><path d="M6 7.500l3.500 1.500-.7 3 2.200 1 2.200-1-.7-3L16 7.500M8 15.500l3-1.500 3 1.500" fill="none" stroke="#f8421e" strokeWidth="1.200" /></svg>
);
const Firefox = () => (
  <svg width="24" height="24" viewBox="0 0 24 24">
    <defs><linearGradient id="ff" x1=".8" y1="0" x2=".2" y2="1"><stop offset="0" stopColor="#ffe03a" /><stop offset=".5" stopColor="#ff7a2a" /><stop offset="1" stopColor="#f02a5c" /></linearGradient></defs>
    <path d="M14 0c1 3 3 3 4 5l1-1c3 3 4 6 4 9a11.200 11.200 0 0 1-22.400 0C.6 9 2 6 3 4l1 2.500C6 4 8 5 9 5c1 0 1-1 1.500-2z" fill="url(#ff)" />
    <circle cx="12.500" cy="12" r="5" fill="#7543e0" /><path d="M3 8c3-2 5-1 8 1-1 2-3 1-4 3s1 5 5 5c-6 3-10-2-9-9z" fill="#ff8f27" />
  </svg>
);
const Edge = () => (
  <svg width="24" height="24" viewBox="0 0 24 24">
    <defs><linearGradient id="eg" x1="0" y1=".3" x2="1" y2=".4"><stop offset="0" stopColor="#2293dc" /><stop offset=".6" stopColor="#2fc1d6" /><stop offset="1" stopColor="#66e05a" /></linearGradient></defs>
    <circle cx="12" cy="12" r="12" fill="#1674c4" />
    <path d="M0 11C1 4 6 0 12 0c7 0 12 5 12 10 0 4-3 6-6 6-4 0-4-2-3-3 0-8-10-9-15-2z" fill="url(#eg)" />
    <path d="M8 13c0 6 5 10 13 7-6 7-17 3-17-5 0-3 2-5 5-6-1 2-1 3-1 4z" fill="#124f9e" />
    <path d="M24 12c-1 3-3 4-6 4-4 0-4-2-3-3 0-2-1-3-2.500-3C9.500 11 10 18 17 19c3 0 4-.5 5-1 1.500-2 2-4 2-6z" fill="#d6d6d6" />
  </svg>
);

function WinTaskbar() {
  return (
    <Taskbar>
      <Start><svg width="16" height="16"><path d="M0 2.300L6.700 1.300V7.600H0zM7.500 1.200L16 0v7.600H7.500zM0 8.400h6.700v6.300L0 13.700zM7.500 8.400H16V16l-8.500-1.200z" fill="#000" /></svg></Start>
      <Search>
        <svg width="17" height="17" fill="none" stroke="#111" strokeWidth="1.300"><circle cx="10.500" cy="6" r="5.200" /><path d="M7 9.800L.7 16.200" /></svg>
        <Gap $w={11} /><Fit w={128}>Type here to search</Fit><Gap $w={98} />
        <SearchArt />
      </Search>
      <TaskButton $w={48}><AppIcon><svg width="16" height="16"><circle cx="8" cy="8" r="6.800" fill="none" stroke="#000" strokeWidth="2" /></svg></AppIcon></TaskButton>
      <TaskButton $w={48}><AppIcon><svg width="16" height="16" fill="none" stroke="#000" strokeWidth="1.200"><path d="M.6 1v2.500h10.300V1M.6 15v-2.500h10.300V15M.6 5.500h10.300v5H.6zM14.500 0v3M14.500 8v8" /><path d="M13 4h3v3h-3z" fill="#000" stroke="none" /></svg></AppIcon></TaskButton>
      <TaskButton $w={54} $line={40}><AppIcon $pl={3}><Chrome /></AppIcon></TaskButton>
      <TaskButton $w={44} $line={40}><AppIcon><Explorer /></AppIcon></TaskButton>
      <TaskButton $w={54}><AppIcon><Brave /></AppIcon></TaskButton>
      <TaskButton $w={44}><AppIcon><Firefox /></AppIcon></TaskButton>
      <TaskButton $w={52} $line={40}><AppIcon $pl={1}><Edge /></AppIcon></TaskButton>
      <TaskButton $w={48} $line={48} $on><AppIcon><WordLogo s={23} /></AppIcon></TaskButton>
      <Tray>
        <svg width="12" height="8" fill="none" stroke="#111" strokeWidth="1.300"><path d="M.7 7L6 1.500 11.300 7" /></svg>
        <Gap $w={12} />
        <svg width="12" height="16"><rect width="12" height="16" rx="5" fill="#0a84ff" /><path d="M3 5l6 5.500-3 2.500V3l3 2.500L3 11" fill="none" stroke="#fff" strokeWidth="1.100" /></svg>
        <Gap $w={10} />
        <svg width="17" height="12"><path d="M5.500 3.500h9v7h-9z" fill="none" stroke="#000" /><path d="M7 5h6v4H7zM15 5h1.500v4H15zM0 2h5v2.500L3.500 6h-2L0 4.500zM1 0h1v2H1zM3.500 0h1v2h-1z" fill="#000" /><path d="M2.500 6v3.500H5" stroke="#000" fill="none" /></svg>
        <Gap $w={10} />
        <svg width="13" height="14" fill="none" stroke="#111"><path d="M.5 9C3 4 7 1.500 12.500 1.500M2.500 11c2-4 5-6 10-6M5.500 12.500c1-3 3.500-4.500 7-4.500" /><circle cx="11" cy="12" r="1.700" fill="#000" stroke="none" /></svg>
        <Gap $w={8} />
        <svg width="16" height="14" fill="none" stroke="#111"><path d="M.5 5h2.700l3.300-3.500v11L3.200 9.500H.5z" /><path d="M8.500 5c1 1.200 1 3 0 4M10.500 3.200c2 2.200 2 5.500 0 7.600" /><path d="M12.800 1.500c3 3 3 8 0 11" stroke="#999" /></svg>
        <Gap $w={10} />
        <TrayText><Fit w={23}>ENG</Fit><Fit w={24}>INTL</Fit></TrayText>
        <Gap $w={10} />
        <TrayText><Fit w={42}>6:36 PM</Fit><Fit w={57}>10/13/2022</Fit></TrayText>
        <Gap $w={15} />
        <svg width="26" height="30"><path d="M0 3h16v12H7l-3 3v-3H0z" fill="#000" /><path d="M3 6.500h10M3 9.500h10M3 12.500h6" stroke="#d6d6d6" /><circle cx="16" cy="19" r="8.800" fill="#d6d6d6" stroke="#777" /><text x="16" y="23" fontSize="11" fontWeight="600" textAnchor="middle" fill="#111">21</text></svg>
        <Gap $w={10} />
        <Desk />
      </Tray>
    </Taskbar>
  );
}

export default function App() {
  return (
    <Screen>
      <Global />
      <TopBar />
      <RibbonBar />
      <Workspace />
      <StatusBar />
      <WinTaskbar />
      <SizeMenu />
    </Screen>
  );
}
